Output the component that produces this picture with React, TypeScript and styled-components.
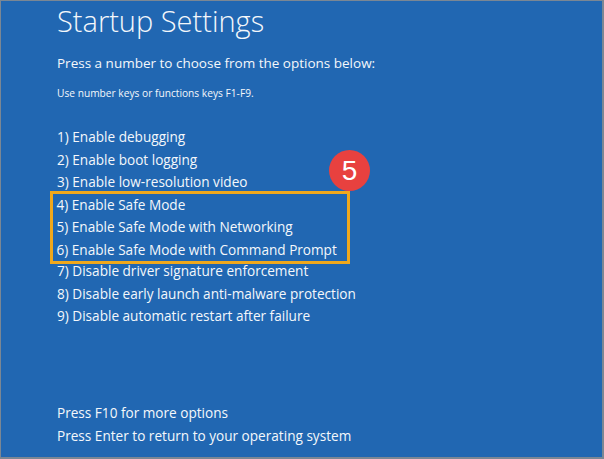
import React from "react";
import styled, { createGlobalStyle } from "styled-components";

const Global = createGlobalStyle`
  html, body { margin: 0; padding: 0; background: #2167b2; }
  * { box-sizing: border-box; }
`;

const Screen = styled.div`
  width: 604px;
  height: 459px;
  background: #2167b2;
  border-style: solid;
  border-color: #7b8794;
  border-width: 1px 2px 2px 1px;
  padding: 0 0 0 56px;
  display: flex;
  flex-direction: column;
  font-family: "Open Sans", "Noto Sans", sans-serif;
  color: #f4f7fb;
  position: relative;
`;

const Title = styled.h1`
  margin: 0;
  font-size: 29px;
  font-weight: 300;
  line-height: 40px;
`;

const Lead = styled.p`
  margin: 12px 0 0;
  font-size: 13.5px;
  line-height: 20px;
`;

const Hint = styled.p`
  margin: 13px 0 0;
  font-size: 10.2px;
  line-height: 14px;
`;

const Options = styled.div`
  margin-top: 26px;
  display: flex;
  flex-direction: column;
  position: relative;
`;

const Row = styled.div`
  font-size: 13.6px;
  line-height: 22.5px;
  white-space: nowrap;
`;

const Highlight = styled.div`
  margin: -3px 0 -4px -7px;
  width: 300px;
  border: 3.5px solid #f0a81c;
  padding: 0 0 0 3.5px;
  display: flex;
  flex-direction: column;
`;

const Badge = styled.div`
  position: absolute;
  left: 272px;
  top: 24px;
  width: 41px;
  height: 41px;
  border-radius: 50%;
  background: #e8413f;
  color: #fff;
  font-family: "Liberation Sans", Arial, sans-serif;
  font-size: 28px;
  display: flex;
  align-items: center;
  justify-content: center;
`;

const Footer = styled.div`
  margin-top: auto;
  margin-bottom: 10px;
  display: flex;
  flex-direction: column;
`;

const before = [
  "1) Enable debugging",
  "2) Enable boot logging",
  "3) Enable low-resolution video",
];
const highlighted = [
  "4) Enable Safe Mode",
  "5) Enable Safe Mode with Networking",
  "6) Enable Safe Mode with Command Prompt",
];
const after = [
  "7) Disable driver signature enforcement",
  "8) Disable early launch anti-malware protection",
  "9) Disable automatic restart after failure",
];

export default function App() {
  return (
    <>
      <Global />
      <Screen>
        <Title>Startup Settings</Title>
        <Lead>Press a number to choose from the options below:</Lead>
        <Hint>Use number keys or functions keys F1-F9.</Hint>
        <Options>
          {before.map((t) => (
            <Row key={t}>{t}</Row>
          ))}
          <Highlight>
            {highlighted.map((t) => (
              <Row key={t}>{t}</Row>
            ))}
          </Highlight>
          {after.map((t) => (
            <Row key={t}>{t}</Row>
          ))}
          <Badge>5</Badge>
        </Options>
        <Footer>
          <Row>Press F10 for more options</Row>
          <Row>Press Enter to return to your operating system</Row>
        </Footer>
      </Screen>
    </>
  );
}
